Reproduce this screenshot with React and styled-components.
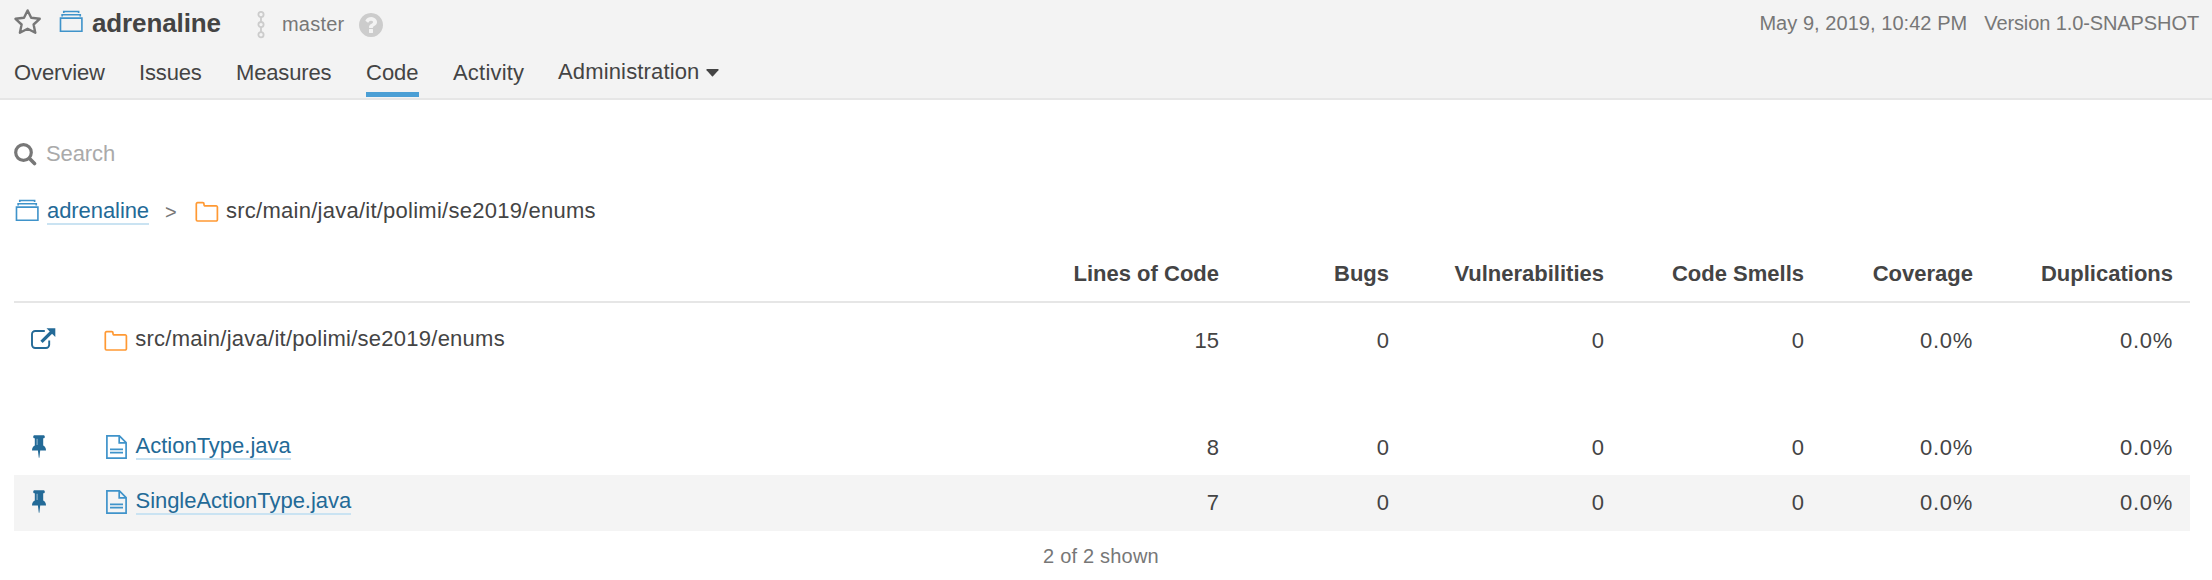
import React from "react";
import styled, { createGlobalStyle } from "styled-components";

const Global = createGlobalStyle`
  body {
    margin: 0;
    background: #fff;
    color: #444;
    font: 22px/28px "Liberation Sans", Arial, sans-serif;
  }
`;

const Page = styled.div`
  height: 580px;
  overflow: hidden;
`;

const Header = styled.header`
  box-sizing: border-box;
  height: 100px;
  background: #f3f3f3;
  border-bottom: 2px solid #e6e6e6;
  padding: 0 13px 0 14px;
`;

const TitleBar = styled.div`
  display: flex;
  align-items: flex-start;
  height: 58px;
`;

const Icon = styled.svg`
  flex: none;
  display: block;
  margin-top: ${(p) => p.$top || 0}px;
  margin-left: ${(p) => p.$left || 0}px;
`;

const Project = styled.h1`
  margin: 9px 0 0 8px;
  width: 129px;
  font-size: 26px;
  line-height: 28px;
  letter-spacing: -0.1px;
  white-space: nowrap;
`;

const Branch = styled.span`
  margin: 10px 0 0 16px;
  width: 63px;
  font-size: 20px;
  letter-spacing: 0.25px;
  color: #777;
`;

const Meta = styled.div`
  display: flex;
  gap: 17px;
  margin: 9px 0 0 auto;
  font-size: 20px;
  color: #777;
  white-space: nowrap;
`;

const MetaItem = styled.span`
  letter-spacing: ${(p) => p.$track}px;
`;

const Tabs = styled.nav`
  display: flex;
`;

const Tab = styled.a`
  box-sizing: border-box;
  display: flex;
  width: ${(p) => p.$width}px;
  height: 39px;
  margin-right: 34px;
  padding-top: ${(p) => (p.$menu ? 0 : 1)}px;
  border-bottom: 5px solid ${(p) => (p.$active ? "#4b9fd5" : "transparent")};
  letter-spacing: ${(p) => p.$track || 0}px;
  white-space: nowrap;
`;

const SearchBar = styled.div`
  display: flex;
  height: 57px;
  padding: 40px 0 0 14px;
  color: #aaa;
`;

const SearchLabel = styled.span`
  margin-left: 9px;
  letter-spacing: -0.1px;
`;

const Crumbs = styled.div`
  display: flex;
  height: 53px;
  padding-left: 14px;
`;

const Link = styled.a`
  height: 24px;
  line-height: 24px;
  margin-top: ${(p) => p.$top || 0}px;
  margin-left: ${(p) => p.$left || 0}px;
  border-bottom: 2px solid #cae3f2;
  color: #236a97;
  letter-spacing: ${(p) => p.$track || 0}px;
  white-space: nowrap;
`;

const Path = styled.span`
  margin-top: ${(p) => p.$top || 0}px;
  margin-left: 7px;
  letter-spacing: 0.25px;
  white-space: nowrap;
`;

const Separator = styled.span`
  margin: 1px 18px 0 16px;
  width: 12px;
  font-size: 20px;
  color: #777;
`;

const Table = styled.div`
  width: 2176px;
  margin-left: 14px;
`;

const Row = styled.div`
  display: grid;
  grid-template-columns: 91px 961px 170px 170px 215px 200px 169px 200px;
  height: ${(p) => p.$height || 55}px;
  background: ${(p) => (p.$shaded ? "#f4f4f4" : "transparent")};
`;

const HeadRow = styled(Row)`
  box-sizing: border-box;
  border-bottom: 2px solid #e6e6e6;
  font-weight: bold;
`;

const Cell = styled.div`
  padding: ${(p) => p.$top}px 17px 0 0;
  text-align: right;
  letter-spacing: ${(p) => (p.$percent ? 0.7 : 0)}px;
  white-space: nowrap;
`;

const NameCell = styled.div`
  display: flex;
`;

const Gap = styled.div`
  height: ${(p) => p.$size}px;
`;

const Footer = styled.div`
  padding-top: 11px;
  text-align: center;
  width: 2202px;
  font-size: 20px;
  letter-spacing: 0.2px;
  color: #777;
`;

const StarIcon = () => (
  <Icon width="28" height="28" viewBox="0 0 28 28" $top={8}>
    <path
      d="M13.6 2.4l3.6 7.4 8.5 1-6.100 5.700 1.700 8.200-7.700-4-7.700 4 1.700-8.200-6.100-5.700 8.500-1z"
      fill="none"
      stroke="#777"
      strokeWidth="2.4"
      strokeLinejoin="round"
    />
  </Icon>
);

const ProjectIcon = (props) => (
  <Icon width="26.4" height="26.4" viewBox="0 0 16 16" fill="#3f93ca" {...props}>
    <path d="M14.985 13.988L1 14.005 1.02 5h13.966v8.988h-.001zM1.998 5.995l.006 7.02L14.022 13 14 6.004l-12.002-.009zM3 4.5V4h9.996l.004.5h1l-.005-1.497-11.98.003L2 4.5h1zm1-2V2h8.003l.002.5h1l-.007-1.497-10.007.003L3 2.5h1z" />
  </Icon>
);

const BranchIcon = (props) => (
  <Icon width="10" height="30" viewBox="0 0 10 30" fill="none" stroke="#ccc" strokeWidth="1.8" {...props}>
    <circle cx="5" cy="4.5" r="2.6" />
    <circle cx="5" cy="14.6" r="2.6" />
    <circle cx="5" cy="24.8" r="2.6" />
    <path d="M5 7.2v4.7M5 17.3v4.8" />
  </Icon>
);

const HelpIcon = (props) => (
  <Icon width="28" height="28" viewBox="0 0 1792 1792" fill="#ccc" {...props}>
    <path d="M1024 1376v-192q0-14-9-23t-23-9h-192q-14 0-23 9t-9 23v192q0 14 9 23t23 9h192q14 0 23-9t9-23zm256-672q0-88-55.5-163t-138.5-116-170-41q-243 0-371 213-15 24 8 42l132 100q7 6 19 6 16 0 25-12 53-68 86-92 34-24 86-24 48 0 85.5 26t37.5 59q0 38-20 61t-68 45q-63 28-115.5 86.5t-52.5 125.5v36q0 14 9 23t23 9h192q14 0 23-9t9-23q0-19 21.5-49.5t54.5-49.5q32-18 49-28.5t46-35 44.5-48 28-60.5 12.5-81zm384 192q0 209-103 385.5t-279.5 279.5-385.5 103-385.5-103-279.5-279.5-103-385.5 103-385.5 279.5-279.5 385.5-103 385.5 103 279.5 279.5 103 385.5z" />
  </Icon>
);

const SearchIcon = () => (
  <Icon width="23" height="23" viewBox="0 0 23 23" fill="none" stroke="#777" $top={3}>
    <circle cx="9.5" cy="9.5" r="7.8" strokeWidth="3.2" />
    <path d="M15.5 15.5l5 5" strokeWidth="3.6" strokeLinecap="round" />
  </Icon>
);

const FolderIcon = (props) => (
  <Icon width="24" height="22" viewBox="0 0 24 22" fill="none" stroke="#ff9933" strokeWidth="1.7" {...props}>
    <path d="M1.3 2.9a1.2 1.2 0 0 1 1.2-1.2h5.3a1.2 1.2 0 0 1 1.2 1.2v.8a1.2 1.2 0 0 0 1.2 1.2h11a1.2 1.2 0 0 1 1.2 1.2v12.7a1.2 1.2 0 0 1-1.2 1.2H2.5a1.2 1.2 0 0 1-1.2-1.2z" />
  </Icon>
);

const FileIcon = (props) => (
  <Icon width="21" height="24" viewBox="0 0 21 24" fill="none" stroke="#3f93ca" strokeWidth="1.7" {...props}>
    <path d="M.9.9h12.500l6.700 6.700v15.500H.9zM13.200.9v7h7M4 14.300h13M4 17.700h13" />
  </Icon>
);

const OpenIcon = (props) => (
  <Icon width="25" height="22" viewBox="0 0 25 22" fill="none" stroke="#236a97" {...props}>
    <path d="M13.8 3H4.2A3.2 3.2 0 0 0 1 6.2v10.6A3.2 3.2 0 0 0 4.2 20H15a3.2 3.2 0 0 0 3.2-3.2V12.6" strokeWidth="1.9" />
    <path d="M10.5 13.8L20.5 4" strokeWidth="3.2" />
    <path d="M15.500.3h8.800v8.800z" fill="#236a97" stroke="none" />
  </Icon>
);

const PinIcon = (props) => (
  <Icon width="14" height="23" viewBox="0 0 14 23" fill="#236a97" {...props}>
    <path d="M2.2.3h9.600q1 0 1 1.500t-1 1.500h-.6v7.200q2.800 1.300 2.800 5H8.200L7.400 22.700h-.6L5.900 15.500H0q0-3.700 2.800-5V3.300h-.6q-1 0-1-1.500t1-1.500z" />
    <path d="M5.100 3.800v6.200" stroke="#a9c7d9" strokeWidth=".9" />
  </Icon>
);

const Values = ({ items, top }) =>
  items.map((value, i) => (
    <Cell key={i} $top={top} $percent={value.endsWith("%")}>
      {value}
    </Cell>
  ));

const files = [
  { name: "ActionType.java", lines: "8", track: 0 },
  { name: "SingleActionType.java", lines: "7", track: -0.04, shaded: true },
];

export default function App() {
  return (
    <Page>
      <Global />
      <Header>
        <TitleBar>
          <StarIcon />
          <ProjectIcon $top={9} $left={15.5} />
          <Project>adrenaline</Project>
          <BranchIcon $top={10} $left={35} />
          <Branch>master</Branch>
          <HelpIcon $top={10.5} $left={12} />
          <Meta>
            <MetaItem $track={0.05}>May 9, 2019, 10:42 PM</MetaItem>
            <MetaItem $track={-0.1}>Version 1.0-SNAPSHOT</MetaItem>
          </Meta>
        </TitleBar>
        <Tabs>
          <Tab $width={91} $track={-0.1}>Overview</Tab>
          <Tab $width={63} $track={-0.15}>Issues</Tab>
          <Tab $width={96} $track={-0.15}>Measures</Tab>
          <Tab $width={53} $active>Code</Tab>
          <Tab $width={71} $track={0.2}>Activity</Tab>
          <Tab $width={165} $menu $track={0.15}>
            Administration
            <Icon width="13" height="8" viewBox="0 0 13 8" $top={11} $left={6}>
              <path d="M.8 0h11.4q.8.5.2 1.2L7 7.3q-.5.5-1 0L.6 1.2Q0 .5.8 0z" fill="#444" />
            </Icon>
          </Tab>
        </Tabs>
      </Header>

      <SearchBar>
        <SearchIcon />
        <SearchLabel>Search</SearchLabel>
      </SearchBar>
      <Crumbs>
        <ProjectIcon $top={1} />
        <Link $top={2} $left={6.6} $track={-0.07}>adrenaline</Link>
        <Separator>&gt;</Separator>
        <FolderIcon $top={4} />
        <Path>src/main/java/it/polimi/se2019/enums</Path>
      </Crumbs>

      <Table>
        <HeadRow $height={53}>
          <div />
          <div />
          <Values
            top={10}
            items={["Lines of Code", "Bugs", "Vulnerabilities", "Code Smells", "Coverage", "Duplications"]}
          />
        </HeadRow>
        <Gap $size={10} />
        <Row>
          <OpenIcon $top={15} $left={16.5} />
          <NameCell>
            <FolderIcon $top={17} $left={-0.8} />
            <Path $top={12}>src/main/java/it/polimi/se2019/enums</Path>
          </NameCell>
          <Values top={14} items={["15", "0", "0", "0", "0.0%", "0.0%"]} />
        </Row>
        <Gap $size={52} />
        {files.map((file) => (
          <Row key={file.name} $shaded={file.shaded} $height={file.shaded ? 56 : 55}>
            <PinIcon $top={14.5} $left={18} />
            <NameCell>
              <FileIcon $top={15} $left={1} />
              <Link $top={14} $left={8.5} $track={file.track}>{file.name}</Link>
            </NameCell>
            <Values top={14} items={[file.lines, "0", "0", "0", "0.0%", "0.0%"]} />
          </Row>
        ))}
      </Table>
      <Footer>2 of 2 shown</Footer>
    </Page>
  );
}
